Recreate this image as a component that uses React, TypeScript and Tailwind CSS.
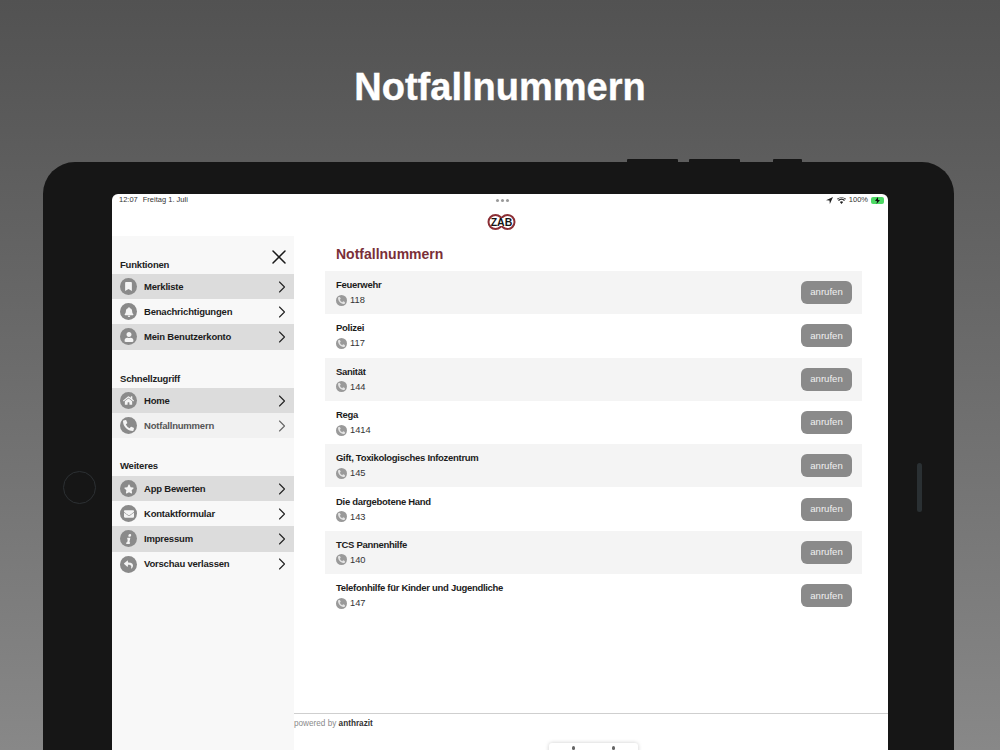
import { ChevronRight, X } from "lucide-react";
import { FaBell, FaBookmark, FaEnvelope, FaHome, FaInfo, FaPhoneAlt, FaReply, FaStar, FaUser } from "react-icons/fa";
import type { ReactNode } from "react";

const sans = "font-['Liberation_Sans',Arial,sans-serif]";

const numbers = [
  { name: "Feuerwehr", nr: "118" },
  { name: "Polizei", nr: "117" },
  { name: "Sanität", nr: "144" },
  { name: "Rega", nr: "1414" },
  { name: "Gift, Toxikologisches Infozentrum", nr: "145" },
  { name: "Die dargebotene Hand", nr: "143" },
  { name: "TCS Pannenhilfe", nr: "140" },
  { name: "Telefonhilfe für Kinder und Jugendliche", nr: "147" },
];

type Item = { label: string; icon: ReactNode; dark?: boolean; active?: boolean };

const functions: Item[] = [
  { label: "Merkliste", icon: <FaBookmark size={9} />, dark: true },
  { label: "Benachrichtigungen", icon: <FaBell size={10} /> },
  { label: "Mein Benutzerkonto", icon: <FaUser size={10} />, dark: true },
];
const quick: Item[] = [
  { label: "Home", icon: <FaHome size={11} />, dark: true },
  { label: "Notfallnummern", icon: <FaPhoneAlt size={11} />, active: true },
];
const more: Item[] = [
  { label: "App Bewerten", icon: <FaStar size={10} />, dark: true },
  { label: "Kontaktformular", icon: <FaEnvelope size={10} /> },
  { label: "Impressum", icon: <FaInfo size={10} className="-skew-x-12" />, dark: true },
  { label: "Vorschau verlassen", icon: <FaReply size={9} /> },
];

function MenuRow({ item }: { item: Item }) {
  return (
    <div
      className={`h-[25.2px] flex items-center pl-[8px] pr-[2px] ${
        item.dark ? "bg-[#dcdcdc]" : item.active ? "bg-[#f1f1f1]" : ""
      }`}
    >
      <div className="w-[17px] h-[17px] rounded-full bg-[#8a8a8a] text-[#f4f4f4] flex items-center justify-center shrink-0">
        {item.icon}
      </div>
      <span
        className={`ml-[7px] flex-1 text-[9.5px] tracking-[-0.2px] font-bold pt-[1px] ${
          item.active ? "text-[#555555]" : "text-[#1c1c1c]"
        }`}
      >
        {item.label}
      </span>
      <ChevronRight size={20} strokeWidth={1.3} className={item.active ? "text-[#666666]" : "text-[#222222]"} />
    </div>
  );
}

function MenuSection({ title, items, className }: { title: string; items: Item[]; className: string }) {
  return (
    <div className={className}>
      <div className="pl-[8px] h-[16.5px] text-[9.5px] tracking-[-0.2px] font-bold text-[#222222] leading-[14px]">{title}</div>
      {items.map((item) => (
        <MenuRow key={item.label} item={item} />
      ))}
    </div>
  );
}

function Logo() {
  return (
    <svg width="30" height="18" viewBox="0 0 30 18">
      <circle cx="8.5" cy="9" r="7" fill="none" stroke="#8c2f35" strokeWidth="2" />
      <circle cx="20.500" cy="9" r="7" fill="none" stroke="#8c2f35" strokeWidth="2" />
      <rect x="4" y="5" width="21" height="8" fill="#ffffff" />
      <text x="14.500" y="12.900" textAnchor="middle" fontSize="10.500" fontWeight="700" fill="#151515" fontFamily="Liberation Sans">
        ZAB
      </text>
    </svg>
  );
}

function StatusIcons() {
  return (
    <div className="flex items-center gap-[3px]">
      <svg width="7" height="7" viewBox="0 0 10 10">
        <path d="M10 0 0 4.500 5 5l.5 5z" fill="#222222" />
      </svg>
      <svg width="9" height="7" viewBox="0 0 12 9" className="ml-[1px]">
        <path d="M6 9 3.800 6.500a3.200 3.200 0 0 1 4.400 0zM2.600 5.200 1.300 3.800a7 7 0 0 1 9.400 0L9.400 5.200a5 5 0 0 0-6.800 0zM.6 3 0 2.300a9 9 0 0 1 12 0L11.400 3a8 8 0 0 0-10.800 0z" fill="#222222" />
      </svg>
      <span className="text-[7.5px] text-[#333333] leading-none">100%</span>
      <div className="flex h-[7px] w-[13px] items-center justify-center rounded-[2px] bg-[#4cd964]">
        <svg width="5" height="7" viewBox="0 0 5 7">
          <path d="M3 0 0 4h2L1.500 7 5 3H3z" fill="#111111" />
        </svg>
      </div>
    </div>
  );
}

export default function App() {
  return (
    <div className={`h-[750px] w-[1000px] overflow-hidden bg-gradient-to-b from-[#525252] to-[#888888] ${sans}`}>
      <h1 className="h-[162px] pt-[64px] text-center text-[38px] leading-[46px] font-bold text-white [-webkit-text-stroke:0.4px_white]">
        Notfallnummern
      </h1>

      <div className="relative mx-[43px] h-[588px] w-[911px] rounded-t-[32px] bg-[#161616] px-[69px] pt-[32px]">
        {/* top buttons */}
        <div className="absolute left-[584px] top-[-3px] h-[3px] w-[51px] rounded-t-[1px] bg-[#161616]" />
        <div className="absolute left-[646px] top-[-3px] h-[3px] w-[51px] rounded-t-[1px] bg-[#161616]" />
        <div className="absolute left-[730px] top-[-3px] h-[3px] w-[29px] rounded-t-[1px] bg-[#161616]" />
        {/* home button and side bar */}
        <div className="absolute left-[20px] top-[309px] h-[33px] w-[33px] rounded-full border-[1.5px] border-[#2c3033]" />
        <div className="absolute left-[874px] top-[301px] h-[49px] w-[5px] rounded-full bg-[#2a3033]" />

        <div className="relative flex h-[556px] w-[776px] flex-col overflow-hidden rounded-t-[6px] bg-white">
          <div className="flex h-[12px] shrink-0 items-center justify-between pl-[7px] pr-[4px] text-[7.5px] text-[#333333]">
            <div className="flex gap-[5px]">
              <span>12:07</span>
              <span>Freitag 1. Juli</span>
            </div>
            <div className="absolute left-[384px] top-[5px] flex gap-[2px]">
              <div className="h-[3px] w-[3px] rounded-full bg-[#9a9a9a]" />
              <div className="h-[3px] w-[3px] rounded-full bg-[#9a9a9a]" />
              <div className="h-[3px] w-[3px] rounded-full bg-[#9a9a9a]" />
            </div>
            <StatusIcons />
          </div>

          <div className="flex h-[30px] shrink-0 items-center justify-center pl-[4px] pt-[1px]">
            <Logo />
          </div>

          <div className="flex min-h-0 flex-1">
            <aside className="relative w-[182px] shrink-0 bg-[#f8f8f8] pt-[21.5px]">
              <X size={24} strokeWidth={1.5} className="absolute right-[3px] top-[8.5px] text-[#1a1a1a]" />
              <MenuSection title="Funktionen" items={functions} className="" />
              <MenuSection title="Schnellzugriff" items={quick} className="mt-[22px]" />
              <MenuSection title="Weiteres" items={more} className="mt-[21px]" />
            </aside>

            <main className="flex min-w-0 flex-1 flex-col">
              <div className="flex-1 pl-[31px] pr-[26px]">
                <h2 className="h-[35px] pl-[11px] pt-[9px] text-[14px] leading-[18px] font-bold text-[#7a2f38]">Notfallnummern</h2>
                {numbers.map((row, i) => (
                  <div
                    key={row.name}
                    className={`flex h-[43.3px] items-center justify-between pl-[11px] pr-[10px] ${i % 2 === 0 ? "bg-[#f4f4f4]" : ""}`}
                  >
                    <div>
                      <div className="text-[9.5px] leading-[12px] tracking-[-0.3px] font-bold text-[#1c1c1c]">{row.name}</div>
                      <div className="mt-[3px] flex items-center gap-[3px] text-[9.3px] leading-[12px] text-[#333333]">
                        <div className="flex h-[11px] w-[11px] items-center justify-center rounded-full bg-[#9a9a9a] text-[#e4e4e4]">
                          <FaPhoneAlt size={7} />
                        </div>
                        {row.nr}
                      </div>
                    </div>
                    <button className="h-[23px] w-[51px] rounded-[6px] bg-[#8a8a8a] text-[9.6px] text-[#f0f0f0]">anrufen</button>
                  </div>
                ))}
              </div>
              <div className="h-[37px] shrink-0 border-t border-[#cfcfcf] pt-[4px] text-[8.2px] leading-[11px] text-[#8a8a8a]">
                powered by <span className="font-bold text-[#333333]">anthrazit</span>
              </div>
            </main>
          </div>

          {/* toolbar peeking in at the bottom */}
          <div className="absolute left-[437px] top-[549px] flex h-[12px] w-[89px] justify-center gap-[37px] rounded-[3px] bg-white pt-[3px] shadow-[0_0_4px_rgba(0,0,0,0.2)]">
            <div className="h-[4px] w-[3px] rounded-full bg-[#666666]" />
            <div className="h-[4px] w-[3px] rounded-full bg-[#666666]" />
          </div>
        </div>
      </div>
    </div>
  );
}
